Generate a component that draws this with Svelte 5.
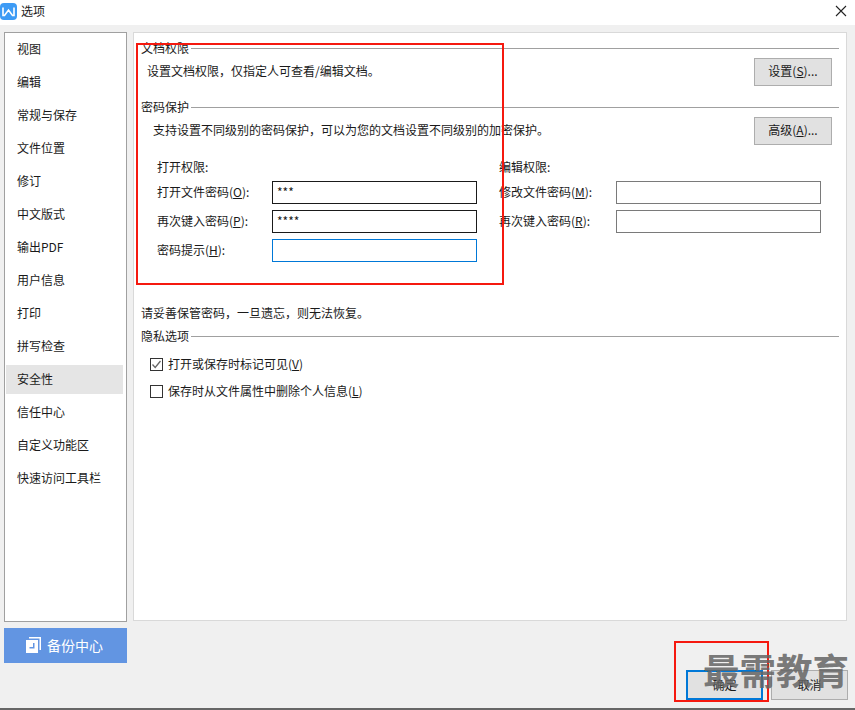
<script>
  const navItems = ["视图", "编辑", "常规与保存", "文件位置", "修订", "中文版式", "输出PDF", "用户信息", "打印", "拼写检查", "安全性", "信任中心", "自定义功能区", "快速访问工具栏"];
  let selected = "安全性";
</script>

<div class="dialog">
  <div class="titlebar">
    <svg class="logo" width="17" height="17" viewBox="0 0 17 17">
      <rect width="17" height="17" rx="4" fill="#3d9bf5" />
      <path d="M3 4.5V12.5H4.5L8.5 7L12.5 12.5H14V4.5" fill="none" stroke="#fff" stroke-width="1.6" />
    </svg>
    <span class="title">选项</span>
    <svg class="close" width="12" height="12" viewBox="0 0 12 12">
      <path d="M1 1L11 11M11 1L1 11" stroke="#222" stroke-width="1.1" />
    </svg>
  </div>

  <div class="body">
    <div class="columns">
      <div class="side">
        <ul class="nav">
          {#each navItems as item}
            <li class:active={item === selected}>{item}</li>
          {/each}
        </ul>
        <div class="backup">
          <svg width="15" height="16" viewBox="0 0 15 16">
            <path d="M3 0H15V13H13.5V1.5H3Z" fill="#fff" />
            <path fill-rule="evenodd" d="M0 3H12V16H0ZM7 6V10H3.5V11.5H8.5V6Z" fill="#fff" />
          </svg>
          <span>备份中心</span>
        </div>
      </div>

      <div class="panel">
        <div class="group-head first"><span>文档权限</span><i></i></div>
        <div class="row-desc one">
          <span>设置文档权限，仅指定人可查看/编辑文档。</span>
          <button class="btn">设置(<u>S</u>)...</button>
        </div>

        <div class="group-head"><span>密码保护</span><i></i></div>
        <div class="row-desc two">
          <span>支持设置不同级别的密码保护，可以为您的文档设置不同级别的加密保护。</span>
          <button class="btn">高级(<u>A</u>)...</button>
        </div>

        <div class="perms">
          <div class="perm left">
            <div class="perm-title">打开权限:</div>
            <div class="field"><label>打开文件密码(<u>O</u>):</label><div class="input dark">***</div></div>
            <div class="field"><label>再次键入密码(<u>P</u>):</label><div class="input dark">****</div></div>
            <div class="field"><label>密码提示(<u>H</u>):</label><div class="input focus"></div></div>
          </div>
          <div class="perm right">
            <div class="perm-title">编辑权限:</div>
            <div class="field"><label>修改文件密码(<u>M</u>):</label><div class="input"></div></div>
            <div class="field"><label>再次键入密码(<u>R</u>):</label><div class="input"></div></div>
          </div>
        </div>

        <div class="warn">请妥善保管密码，一旦遗忘，则无法恢复。</div>
        <div class="group-head third"><span>隐私选项</span><i></i></div>
        <div class="check first-check">
          <svg width="13" height="13" viewBox="0 0 13 13">
            <rect x="0.5" y="0.5" width="12" height="12" fill="#fff" stroke="#333" />
            <path d="M2.5 6.5L5.2 9.5L10.5 3" fill="none" stroke="#666" stroke-width="1.3" />
          </svg>
          <span>打开或保存时标记可见(<u>V</u>)</span>
        </div>
        <div class="check">
          <svg width="13" height="13" viewBox="0 0 13 13">
            <rect x="0.5" y="0.5" width="12" height="12" fill="#fff" stroke="#333" />
          </svg>
          <span>保存时从文件属性中删除个人信息(<u>L</u>)</span>
        </div>
      </div>
    </div>

    <div class="footer">
      <button class="btn wide primary">确定</button>
      <button class="btn wide">取消</button>
    </div>
  </div>

  <div class="mark mark-one"></div>
  <div class="mark mark-two"></div>
  <div class="watermark">最需教育</div>
</div>

<style>
  :global(body) {
    margin: 0;
    background: #f0f0f0;
  }

  .dialog {
    position: relative;
    width: 855px;
    height: 710px;
    overflow: hidden;
    display: flex;
    flex-direction: column;
    font-family: "Noto Sans CJK SC", "Liberation Sans", sans-serif;
    font-size: 12px;
    line-height: 16px;
    color: #1a1a1a;
    box-sizing: border-box;
    border-bottom: 2px solid #666;
  }

  .titlebar {
    height: 25px;
    flex: none;
    background: #fff;
    display: flex;
    align-items: center;
    padding: 0 8px 3px 0;
    box-sizing: border-box;
  }

  .title {
    margin-left: 4px;
  }

  .close {
    margin-left: auto;
  }

  .body {
    flex: 1;
    background: #f0f0f0;
    padding: 7px 7px 0 4px;
    display: flex;
    flex-direction: column;
  }

  .columns {
    display: flex;
    gap: 6px;
  }

  .side {
    width: 123px;
    flex: none;
  }

  .nav {
    list-style: none;
    margin: 0;
    padding: 2px 1px 1px;
    height: 590px;
    box-sizing: border-box;
    background: #fff;
    border: 1px solid #a0a0a0;
  }

  .nav li {
    height: 29px;
    margin-bottom: 4px;
    padding-left: 11px;
    line-height: 28px;
    width: 117px;
    box-sizing: border-box;
  }

  .nav li.active {
    background: #e5e5e5;
  }

  .backup {
    margin-top: 6px;
    height: 35px;
    box-sizing: border-box;
    padding: 0 2px 2px 0;
    background: #6295e2;
    color: #fff;
    font-size: 14px;
    display: flex;
    align-items: center;
    justify-content: center;
    gap: 6px;
  }

  .panel {
    width: 714px;
    height: 589px;
    box-sizing: border-box;
    background: #fff;
    border: 1px solid #d9d9d9;
    padding: 0 7px;
  }

  .group-head {
    display: flex;
    align-items: center;
    gap: 2px;
    height: 16px;
  }

  .group-head i {
    flex: 1;
    height: 1px;
    background: #a0a0a0;
  }

  .group-head.first {
    margin-top: 7px;
  }

  .row-desc {
    display: flex;
    justify-content: space-between;
    align-items: flex-start;
    padding-right: 7px;
  }

  .row-desc.one {
    height: 43px;
    padding-left: 6px;
  }

  .row-desc.two {
    height: 37px;
    padding-left: 12px;
  }

  .row-desc span {
    margin-top: 7px;
  }

  .btn {
    width: 78px;
    height: 28px;
    flex: none;
    box-sizing: border-box;
    padding: 0 0 2px;
    border: 1px solid #adadad;
    background: #e1e1e1;
    color: #1a1a1a;
    font: inherit;
  }

  .row-desc .btn {
    margin-top: 2px;
  }

  .perms {
    display: flex;
    margin-top: 7px;
    padding-left: 16px;
  }

  .perm.left {
    width: 342px;
  }

  .perm-title {
    height: 22px;
    line-height: 16px;
  }

  .field {
    display: flex;
    align-items: center;
    height: 23px;
    margin-bottom: 6px;
  }

  .field label {
    padding-bottom: 2px;
  }

  .perm.left label {
    width: 115px;
  }

  .perm.right label {
    width: 117px;
  }

  .input {
    width: 205px;
    height: 23px;
    box-sizing: border-box;
    border: 1px solid #7a7a7a;
    background: #fff;
    padding-left: 4px;
    line-height: 19px;
  }

  .input.dark {
    border-color: #1a1a1a;
  }

  .input.focus {
    border-color: #0078d7;
  }

  .warn {
    margin-top: 37px;
  }

  .group-head.third {
    margin-top: 7px;
  }

  .check {
    display: flex;
    align-items: center;
    gap: 5px;
    margin-left: 9px;
    margin-top: 11px;
  }

  .check.first-check {
    margin-top: 12px;
  }

  .footer {
    display: flex;
    justify-content: flex-end;
    gap: 8px;
    margin-top: 7px;
  }

  .btn.wide {
    width: 77px;
    height: 30px;
    padding: 0;
  }

  .btn.primary {
    border: 2px solid #0078d7;
  }

  .mark {
    position: absolute;
    border: 2px solid #f5190f;
    box-sizing: border-box;
  }

  .mark-one {
    left: 136px;
    top: 43px;
    width: 368px;
    height: 242px;
  }

  .mark-two {
    left: 674px;
    top: 641px;
    width: 95px;
    height: 61px;
  }

  .watermark {
    position: absolute;
    left: 703px;
    top: 648px;
    font-size: 36.5px;
    line-height: 44px;
    font-weight: 700;
    color: rgba(100, 100, 100, 0.85);
    white-space: nowrap;
  }
</style>
